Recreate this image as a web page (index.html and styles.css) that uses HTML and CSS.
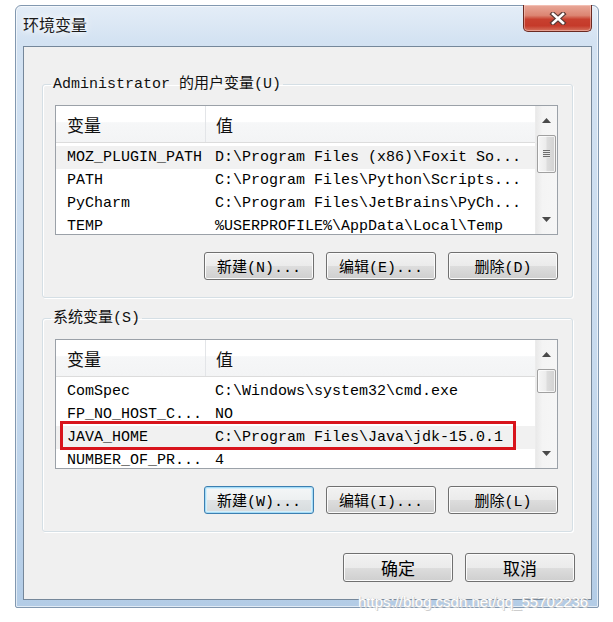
FILE: index.html
```html
<!DOCTYPE html>
<html lang="zh-CN">
<head>
    <meta charset="UTF-8">
    <meta name="viewport" content="width=device-width, initial-scale=1.0">
    <title>环境变量</title>
    <link rel="stylesheet" href="styles.css">
</head>
<body>

    <div class="window">
        <div class="titlebar">
            <span class="title">环境变量</span>
            <button class="close-btn" title="关闭">
                <svg width="18" height="13" viewBox="0 0 18 13">
                    <path d="M4 2 L14 11 M14 2 L4 11" stroke="#5a3a36" stroke-width="5" stroke-linecap="square"/>
                    <path d="M4 2 L14 11 M14 2 L4 11" stroke="#ffffff" stroke-width="2.6" stroke-linecap="square"/>
                </svg>
            </button>
        </div>

        <div class="client">
            <fieldset class="group">
                <legend>Administrator 的用户变量(U)</legend>
                <div class="listview">
                    <div class="lv-main">
                        <div class="lv-header">
                            <span class="col-name">变量</span>
                            <span class="col-value">值</span>
                        </div>
                        <div class="lv-rows">
                            <div class="lv-row hot"><span class="col-name">MOZ_PLUGIN_PATH</span><span class="col-value">D:\Program Files (x86)\Foxit So...</span></div>
                            <div class="lv-row"><span class="col-name">PATH</span><span class="col-value">C:\Program Files\Python\Scripts...</span></div>
                            <div class="lv-row"><span class="col-name">PyCharm</span><span class="col-value">C:\Program Files\JetBrains\PyCh...</span></div>
                            <div class="lv-row"><span class="col-name">TEMP</span><span class="col-value">%USERPROFILE%\AppData\Local\Temp</span></div>
                        </div>
                    </div>
                    <div class="scrollbar">
                        <div class="sb-arrow">
                            <svg width="9" height="5" viewBox="0 0 9 5"><polygon points="4.5,0 9,5 0,5" fill="#4a4a4a"/></svg>
                        </div>
                        <div class="sb-track">
                            <div class="sb-thumb big"><span class="grip"></span></div>
                        </div>
                        <div class="sb-arrow">
                            <svg width="9" height="5" viewBox="0 0 9 5"><polygon points="0,0 9,0 4.5,5" fill="#4a4a4a"/></svg>
                        </div>
                    </div>
                </div>
                <div class="btn-row">
                    <button class="btn">新建(N)...</button>
                    <button class="btn">编辑(E)...</button>
                    <button class="btn">删除(D)</button>
                </div>
            </fieldset>

            <fieldset class="group second">
                <legend>系统变量(S)</legend>
                <div class="listview">
                    <div class="lv-main">
                        <div class="lv-header">
                            <span class="col-name">变量</span>
                            <span class="col-value">值</span>
                        </div>
                        <div class="lv-rows">
                            <div class="lv-row"><span class="col-name">ComSpec</span><span class="col-value">C:\Windows\system32\cmd.exe</span></div>
                            <div class="lv-row"><span class="col-name">FP_NO_HOST_C...</span><span class="col-value">NO</span></div>
                            <div class="lv-row hot"><span class="col-name">JAVA_HOME</span><span class="col-value">C:\Program Files\Java\jdk-15.0.1</span></div>
                            <div class="lv-row"><span class="col-name">NUMBER_OF_PR...</span><span class="col-value">4</span></div>
                        </div>
                        <div class="mark"></div>
                    </div>
                    <div class="scrollbar">
                        <div class="sb-arrow">
                            <svg width="9" height="5" viewBox="0 0 9 5"><polygon points="4.5,0 9,5 0,5" fill="#4a4a4a"/></svg>
                        </div>
                        <div class="sb-track">
                            <div class="sb-thumb small"></div>
                        </div>
                        <div class="sb-arrow">
                            <svg width="9" height="5" viewBox="0 0 9 5"><polygon points="0,0 9,0 4.5,5" fill="#4a4a4a"/></svg>
                        </div>
                    </div>
                </div>
                <div class="btn-row">
                    <button class="btn focused">新建(W)...</button>
                    <button class="btn">编辑(I)...</button>
                    <button class="btn">删除(L)</button>
                </div>
            </fieldset>

            <div class="dialog-btns">
                <button class="btn big">确定</button>
                <button class="btn big">取消</button>
            </div>
        </div>
    </div>

    <div class="watermark">https://blog.csdn.net/qq_55702236</div>

</body>
</html>
```

FILE: styles.css
```css
* {
    box-sizing: border-box;
}

body {
    margin: 0;
    padding: 5px 0 0 15px;
    background-color: #ffffff;
    font-family: "Liberation Mono", "Noto Sans CJK SC", monospace;
    color: #111;
    position: relative;
    height: 622px;
    overflow: hidden;
}

/* window frame */
.window {
    width: 584px;
    height: 603px;
    border: 1px solid #8298b0;
    border-radius: 6px 6px 2px 2px;
    padding: 0 6px 7px 7px;
    background: linear-gradient(180deg, #e4edf7 0%, #d3e2f2 6%, #c7daee 60%, #b3cce6 100%);
    box-shadow: inset 0 0 0 1px rgba(255, 255, 255, 0.6);
}

.titlebar {
    height: 40px;
    display: flex;
    justify-content: space-between;
    align-items: flex-start;
}

.title {
    margin-top: 8px;
    font-family: "Noto Sans CJK SC", sans-serif;
    font-size: 16px;
    line-height: 20px;
    color: #1a1a1a;
    text-shadow: 0 0 6px #ffffff, 0 0 10px #ffffff;
}

.close-btn {
    width: 69px;
    height: 27px;
    margin-top: -1px;
    padding: 0;
    border: 1px solid #6a2a22;
    border-top: none;
    border-radius: 0 0 5px 5px;
    background: linear-gradient(180deg, #e9a899 0%, #dc8572 40%, #c8402f 55%, #c53a2a 80%, #d5735f 100%);
    box-shadow: inset 0 0 0 1px rgba(255, 220, 210, 0.45);
    display: flex;
    align-items: center;
    justify-content: center;
}

.close-btn svg {
    display: block;
}

/* dialog body */
.client {
    height: 554px;
    border: 1px solid #75879a;
    background-color: #f0f0f0;
    padding: 27px 18px 0 18px;
}

.group {
    margin: 0;
    min-width: 0;
    border: 1px solid #d5dfe5;
    border-radius: 3px;
    padding: 10px 14px 17px 12px;
    box-shadow: inset 1px 1px 0 #ffffff, 1px 1px 0 #ffffff;
}

.group.second {
    margin-top: 10px;
}

.group legend {
    padding: 0 2px;
    margin-left: -4px;
    font-size: 15px;
    line-height: 21px;
    color: #111;
}

/* list views */
.listview {
    height: 130px;
    border: 1px solid #9ba1a8;
    background-color: #ffffff;
    display: flex;
    overflow: hidden;
}

.lv-main {
    flex: 1;
    min-width: 0;
    overflow: hidden;
    position: relative;
}

.lv-header {
    height: 37px;
    display: flex;
    align-items: stretch;
    border-bottom: 1px solid #dcdcdc;
    background: linear-gradient(180deg, #ffffff 0%, #ffffff 45%, #f6f7f8 46%, #f3f4f5 100%);
    font-family: "Noto Sans CJK SC", sans-serif;
    font-size: 17px;
    color: #111;
}

.lv-header span {
    display: flex;
    align-items: center;
}

.col-name {
    width: 150px;
    flex-shrink: 0;
    padding-left: 11px;
    white-space: pre;
    overflow: hidden;
}

.col-value {
    padding-left: 9px;
    white-space: pre;
    overflow: hidden;
}

.lv-header .col-name {
    border-right: 1px solid #e3e5e8;
}

.lv-header .col-value {
    padding-left: 10px;
}

.lv-rows {
    padding-top: 3px;
}

.lv-row {
    height: 23px;
    line-height: 23px;
    display: flex;
    font-size: 15px;
    color: #000;
}

.lv-row.hot {
    background-color: #f1f1f1;
}

.mark {
    position: absolute;
    left: 4px;
    top: 81px;
    width: 456px;
    height: 29px;
    border: 3px solid #d8141c;
}

/* scrollbars */
.scrollbar {
    width: 22px;
    flex-shrink: 0;
    display: flex;
    flex-direction: column;
    background: linear-gradient(90deg, #e9e9e9 0%, #f4f4f4 30%, #f6f6f6 100%);
    border-left: 1px solid #ececec;
}

.sb-arrow {
    height: 29px;
    display: flex;
    align-items: center;
    justify-content: center;
    flex-shrink: 0;
}

.sb-track {
    flex: 1;
    padding: 0 1px;
}

.sb-thumb {
    border: 1px solid #a0a0a0;
    border-radius: 2px;
    background: linear-gradient(90deg, #f6f6f6 0%, #ececec 45%, #dcdcdc 55%, #d2d2d2 100%);
    box-shadow: inset 0 0 0 1px rgba(255, 255, 255, 0.7);
    display: flex;
    align-items: center;
    justify-content: center;
}

.sb-thumb.big {
    height: 38px;
}

.sb-thumb.small {
    height: 24px;
}

.grip {
    width: 7px;
    height: 8px;
    background: repeating-linear-gradient(180deg, #6d6d6d 0, #6d6d6d 1px, #e8e8e8 1px, #e8e8e8 2px);
}

/* buttons */
.btn-row {
    margin-top: 17px;
    display: flex;
    justify-content: flex-end;
    gap: 12px;
}

.btn {
    width: 110px;
    height: 28px;
    padding: 0;
    border: 1px solid #707070;
    border-radius: 3px;
    background: linear-gradient(180deg, #f2f2f2 0%, #ebebeb 50%, #dddddd 51%, #cfcfcf 100%);
    box-shadow: inset 0 0 0 1px #fbfbfb;
    font-family: "Liberation Mono", "Noto Sans CJK SC", monospace;
    font-size: 15px;
    color: #000;
    white-space: pre;
}

.btn.focused {
    border-color: #3c7fb1;
    box-shadow: inset 0 0 0 1px #a6dcf6, inset 0 0 0 2px #d6effb;
    background: linear-gradient(180deg, #f4f6f7 0%, #edf0f1 50%, #e0e4e6 51%, #d6dbdd 100%);
}

.dialog-btns {
    margin-top: 21px;
    margin-right: -2px;
    display: flex;
    justify-content: flex-end;
    gap: 12px;
}

.btn.big {
    height: 29px;
    font-family: "Noto Sans CJK SC", sans-serif;
    font-size: 17px;
}

.watermark {
    position: absolute;
    left: 358px;
    top: 593px;
    font-family: "Liberation Sans", sans-serif;
    font-size: 15px;
    color: #ffffff;
    text-shadow: 0 0 1px #c4c4c4, 1px 1px 0 #cfcfcf;
}
```
